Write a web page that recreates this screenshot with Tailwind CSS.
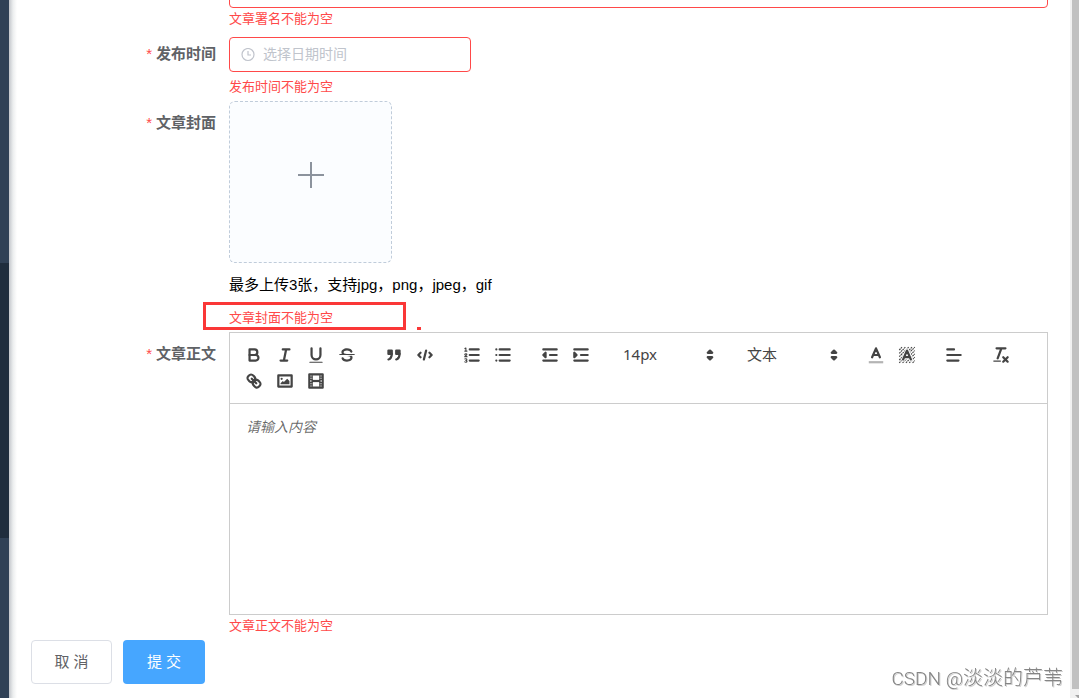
<!DOCTYPE html>
<html lang="zh-CN">
<head>
<meta charset="utf-8">
<meta name="viewport" content="width=device-width, initial-scale=1">
<title>文章发布</title>
<script src="https://cdn.jsdelivr.net/npm/@tailwindcss/browser@4"></script>
</head>
<body class="flex h-screen overflow-hidden bg-white font-['Liberation_Sans','Noto_Sans_CJK_SC',sans-serif] text-[15px] text-[#606266]">

<aside class="flex w-[9px] shrink-0 flex-col bg-[#304156]" aria-label="导航">
  <div class="mt-[263px] h-[275px] bg-[#1f2d3d]"></div>
</aside>
<div class="-mr-2 w-2 shrink-0 bg-linear-to-r from-[#c3c6cb] via-[#eceeef] to-white"></div>

<main class="min-w-0 flex-1 overflow-hidden">
  <form class="pr-[22px]">

    <!-- 署名 -->
    <div class="-mt-[27px] pl-[220px]">
      <input id="author" type="text" aria-label="署名" class="block h-[35px] w-full rounded border border-[#ff4949] px-4">
      <p class="text-[13px] leading-[22px] text-[#ff4949]">文章署名不能为空</p>
    </div>

    <!-- 发布时间 -->
    <div class="mt-[7px] flex gap-[13px]">
      <label for="time" class="w-[207px] shrink-0 text-right font-bold leading-[33px]"><span class="mr-1 font-normal text-[#ff4949]">*</span>发布时间</label>
      <div class="min-w-0 flex-1">
        <div class="flex h-[35px] w-[242px] items-center gap-2 rounded border border-[#ff4949] px-[11px]">
          <svg class="size-[14px] shrink-0" viewBox="0 0 14 14" fill="none" stroke="#c0c4cc" stroke-width="1.2"><circle cx="7" cy="6.500" r="6"/><path d="M7 3V7H10"/></svg>
          <input id="time" type="text" placeholder="选择日期时间" class="min-w-0 flex-1 text-[14px] outline-none placeholder:text-[#c0c4cc]">
        </div>
        <p class="mt-1 text-[13px] leading-[22px] text-[#ff4949]">发布时间不能为空</p>
      </div>
    </div>

    <!-- 封面 -->
    <div class="mt-[3px] flex gap-[13px]">
      <label for="cover" class="w-[207px] shrink-0 text-right font-bold leading-[44px]"><span class="mr-1 font-normal text-[#ff4949]">*</span>文章封面</label>
      <div class="min-w-0 flex-1">
        <label for="cover" class="flex h-[162px] w-[163px] cursor-pointer items-center justify-center rounded-md border border-dashed border-[#c0ccda] bg-[#fbfdff]">
          <svg class="mt-[-14px] size-[26px]" viewBox="0 0 26 26" stroke="#8c939d" stroke-width="2"><path d="M13 0V26M0 13H26"/></svg>
          <input id="cover" type="file" class="hidden" aria-label="上传封面">
        </label>
        <p class="mt-[11px] leading-[22px] text-black">最多上传3张，支持jpg，png，jpeg，gif</p>
        <div class="relative mt-[11px]">
          <p class="text-[13px] leading-[22px] text-[#ff4949]">文章封面不能为空</p>
          <div class="absolute -left-[26px] -top-[5px] h-7 w-[203px] border-3 border-[#fa3737]"></div>
          <div class="absolute left-[188px] top-5 h-[3px] w-1 bg-[#fa3737]"></div>
        </div>
      </div>
    </div>

    <!-- 正文 -->
    <div class="mt-[3px] flex gap-[13px]">
      <label for="content" class="w-[207px] shrink-0 text-right font-bold leading-[44px]"><span class="mr-1 font-normal text-[#ff4949]">*</span>文章正文</label>
      <div class="min-w-0 flex-1">
        <div class="border border-[#ccc]">
          <div class="flex flex-wrap gap-x-4 border-b border-[#ccc] py-[9px] pl-2 pr-[9px] text-[#444] [&_button]:flex [&_button]:h-[26px] [&_button]:w-[31px] [&_button]:items-center [&_button]:justify-center [&_svg]:size-5 [&_svg]:fill-none [&_svg]:stroke-[#444] [&_svg]:stroke-2 [&_svg]:[stroke-linecap:round] [&_svg]:[stroke-linejoin:round]" role="toolbar" aria-label="编辑工具">
            <div class="flex">
              <button type="button" aria-label="加粗"><svg viewBox="0 0 18 18"><path d="M5,4H9.5A2.5,2.5,0,0,1,12,6.5v0A2.5,2.5,0,0,1,9.5,9H5A0,0,0,0,1,5,9V4A0,0,0,0,1,5,4Z"/><path d="M5,9h5.5A2.5,2.5,0,0,1,13,11.5v0A2.5,2.5,0,0,1,10.5,14H5a0,0,0,0,1,0,0V9A0,0,0,0,1,5,9Z"/></svg></button>
              <button type="button" aria-label="斜体"><svg viewBox="0 0 18 18"><path d="M7 4H13M5 14H11M8 14L10 4"/></svg></button>
              <button type="button" aria-label="下划线"><svg viewBox="0 0 18 18"><path d="M5,3V9a4.012,4.012,0,0,0,4,4H9a4.012,4.012,0,0,0,4-4V3"/><rect x="3" y="15" width="12" height="1" rx=".5" fill="#444" stroke="none"/></svg></button>
              <button type="button" aria-label="删除线"><svg viewBox="0 0 18 18"><path style="stroke-width:1" d="M15.5 8.5H2.5"/><g fill="#444" stroke="none"><path d="M9.007,8C6.542,7.791,6,7.519,6,6.5,6,5.792,7.283,5,9,5c1.571,0,2.765.679,2.969,1.309a1,1,0,0,0,1.9-.617C13.356,4.106,11.354,3,9,3,6.2,3,4,4.538,4,6.5a3.2,3.2,0,0,0,.5,1.843Z"/><path d="M8.984,10C11.457,10.208,12,10.479,12,11.5c0,0.708-1.283,1.5-3,1.5-1.571,0-2.765-.679-2.969-1.309a1,1,0,1,0-1.9.617C4.644,13.894,6.646,15,9,15c2.8,0,5-1.538,5-3.5a3.2,3.2,0,0,0-.5-1.843Z"/></g></svg></button>
            </div>
            <div class="flex">
              <button type="button" aria-label="引用"><svg viewBox="0 0 18 18"><g fill="#444"><rect height="3" width="3" x="4" y="5"/><rect height="3" width="3" x="11" y="5"/><path fill-rule="evenodd" d="M7,8c0,4.031-3,5-3,5"/><path fill-rule="evenodd" d="M14,8c0,4.031-3,5-3,5"/></g></svg></button>
              <button type="button" aria-label="代码"><svg viewBox="0 0 18 18"><path d="M5 7L3 9L5 11M13 7L15 9L13 11M10 5L8 13"/></svg></button>
            </div>
            <div class="flex">
              <button type="button" aria-label="有序列表"><svg viewBox="0 0 18 18"><path d="M7 4H15M7 9H15M7 14H15"/><path style="stroke-width:1" d="M2.5,5.5h2M3.5,5.5V2.7L2.6,3.2M4.5,10.5h-2c0-.9,1.9-1,1.9-1.9c0-.7-1.6-.8-1.9-.1M2.6,12.6c.6-.4,1.8-.2,1.8.5c0,.5-.5.8-1,.8c.6,0,1.1.3,1.1.8c0,.8-1.3,1-2,.5"/></svg></button>
              <button type="button" aria-label="无序列表"><svg viewBox="0 0 18 18"><path d="M6 4H15M6 9H15M6 14H15M3 4H3M3 9H3M3 14H3"/></svg></button>
            </div>
            <div class="flex">
              <button type="button" aria-label="减少缩进"><svg viewBox="0 0 18 18"><path d="M3 14H15M3 4H15M9 9H15"/><path fill="#444" d="M5 7V11L3 9Z"/></svg></button>
              <button type="button" aria-label="增加缩进"><svg viewBox="0 0 18 18"><path d="M3 14H15M3 4H15M9 9H15"/><path fill="#444" d="M3 7V11L5 9Z"/></svg></button>
            </div>
            <div class="relative h-[26px] w-[108px]">
              <select aria-label="字号" class="size-full appearance-none bg-transparent pb-0.5 pl-[11px] font-['Noto_Sans','Noto_Sans_CJK_SC',sans-serif] text-[15px] outline-none"><option>14px</option><option>16px</option></select>
              <svg class="pointer-events-none absolute right-0 top-[3px]" viewBox="0 0 18 18"><path fill="#444" d="M7 11L9 13L11 11ZM7 7L9 5L11 7Z"/></svg>
            </div>
            <div class="relative h-[26px] w-[108px]">
              <select aria-label="标题" class="size-full appearance-none bg-transparent pl-[11px] text-[15px] outline-none"><option>文本</option><option>标题1</option></select>
              <svg class="pointer-events-none absolute right-0 top-[3px]" viewBox="0 0 18 18"><path fill="#444" d="M7 11L9 13L11 11ZM7 7L9 5L11 7Z"/></svg>
            </div>
            <div class="flex">
              <button type="button" aria-label="文字颜色"><svg viewBox="0 0 18 18"><path style="stroke-linecap:butt" stroke-opacity=".4" d="M2.5 15.5H15.5"/><path d="M5.5 11L9 3L12.5 11M11.6 9H6.4"/></svg></button>
              <button type="button" aria-label="背景颜色"><svg viewBox="0 0 18 18"><path style="stroke-width:1;stroke-linecap:butt" stroke-dasharray="1.6 .5" d="M2 4.500L4.500 2M2 7.500L7.500 2M2 10.500L10.500 2M2 13.500L13.500 2M2 16L16 2M5 16L16 5M8 16L16 8M11 16L16 11M14 16L16 14"/><path style="stroke:#fff;stroke-width:3.500" d="M5.500 13L9 5L12.500 13M11.600 11H6.400"/><path d="M5.500 13L9 5L12.500 13M11.600 11H6.400"/></svg></button>
            </div>
            <div class="flex">
              <button type="button" aria-label="对齐"><svg viewBox="0 0 18 18"><path d="M3 9H15M3 14H13M3 4H9"/></svg></button>
            </div>
            <div class="flex">
              <button type="button" aria-label="清除格式"><svg viewBox="0 0 18 18"><path d="M5 3H13M6 12L9.350 3M11 11L15 15M15 11L11 15"/><rect x="2" y="14" width="7" height="1" rx=".5" fill="#444" stroke="none"/></svg></button>
            </div>
            <div class="flex">
              <button type="button" aria-label="链接"><svg viewBox="0 0 18 18"><path d="M7 7L11 11"/><path d="M8.9,4.577a3.476,3.476,0,0,1,.36,4.679A3.476,3.476,0,0,1,4.577,8.9C3.185,7.5,2.035,6.4,4.217,4.217S7.5,3.185,8.9,4.577Z"/><path d="M13.423,9.1a3.476,3.476,0,0,0-4.679-.36,3.476,3.476,0,0,0,.36,4.679c1.392,1.392,2.5,2.542,4.679.36S14.815,10.5,13.423,9.1Z"/></svg></button>
              <button type="button" aria-label="图片"><svg viewBox="0 0 18 18"><rect height="10" width="12" x="3" y="4"/><g fill="#444" stroke="none"><circle cx="6" cy="7" r="1"/><path d="M5 12V11L7 9L8 10L11 7L13 9V12Z"/></g></svg></button>
              <button type="button" aria-label="视频"><svg viewBox="0 0 18 18"><rect height="12" width="12" x="3" y="3"/><g fill="#444" stroke="none"><rect height="12" width="1" x="5" y="3"/><rect height="12" width="1" x="12" y="3"/><rect height="2" width="8" x="5" y="8"/><path d="M3 5H6V6H3ZM3 7H6V8H3ZM3 10H6V11H3ZM3 12H6V13H3ZM12 5H15V6H12ZM12 7H15V8H12ZM12 10H15V11H12ZM12 12H15V13H12Z"/></g></svg></button>
            </div>
          </div>
          <textarea id="content" placeholder="请输入内容" class="block h-[210px] w-full resize-none px-4 py-[13px] text-[14px] leading-5 outline-none placeholder:italic placeholder:text-black/60"></textarea>
        </div>
        <p class="text-[13px] leading-[22px] text-[#ff4949]">文章正文不能为空</p>
      </div>
    </div>

    <div class="mt-[3px] flex gap-[11px] pl-[22px]">
      <button type="button" class="h-11 w-[81px] rounded border border-[#dcdfe6] bg-white">取 消</button>
      <button type="submit" class="h-11 w-[82px] rounded bg-[#46a6ff] text-white">提 交</button>
    </div>
  </form>
</main>

<div class="flex w-[9px] shrink-0 flex-col items-end bg-[#f1f1f1]">
  <div class="w-[7px] flex-1 bg-[#c1c1c1]"></div>
  <svg class="h-[9px] w-[7px]" viewBox="0 0 7 9"><path fill="#a3a3a3" d="M3 6H7V9H6Z"/></svg>
</div>

<div class="pointer-events-none fixed bottom-[3px] right-4 whitespace-nowrap font-['Roboto','Noto_Sans_CJK_SC',sans-serif] text-[20px] font-light leading-8 text-[#858585] text-shadow-[1px_1px_0_#d0d0d0]"><span class="text-[19px]">CSDN @</span>淡淡的芦苇</div>
</body>
</html>
